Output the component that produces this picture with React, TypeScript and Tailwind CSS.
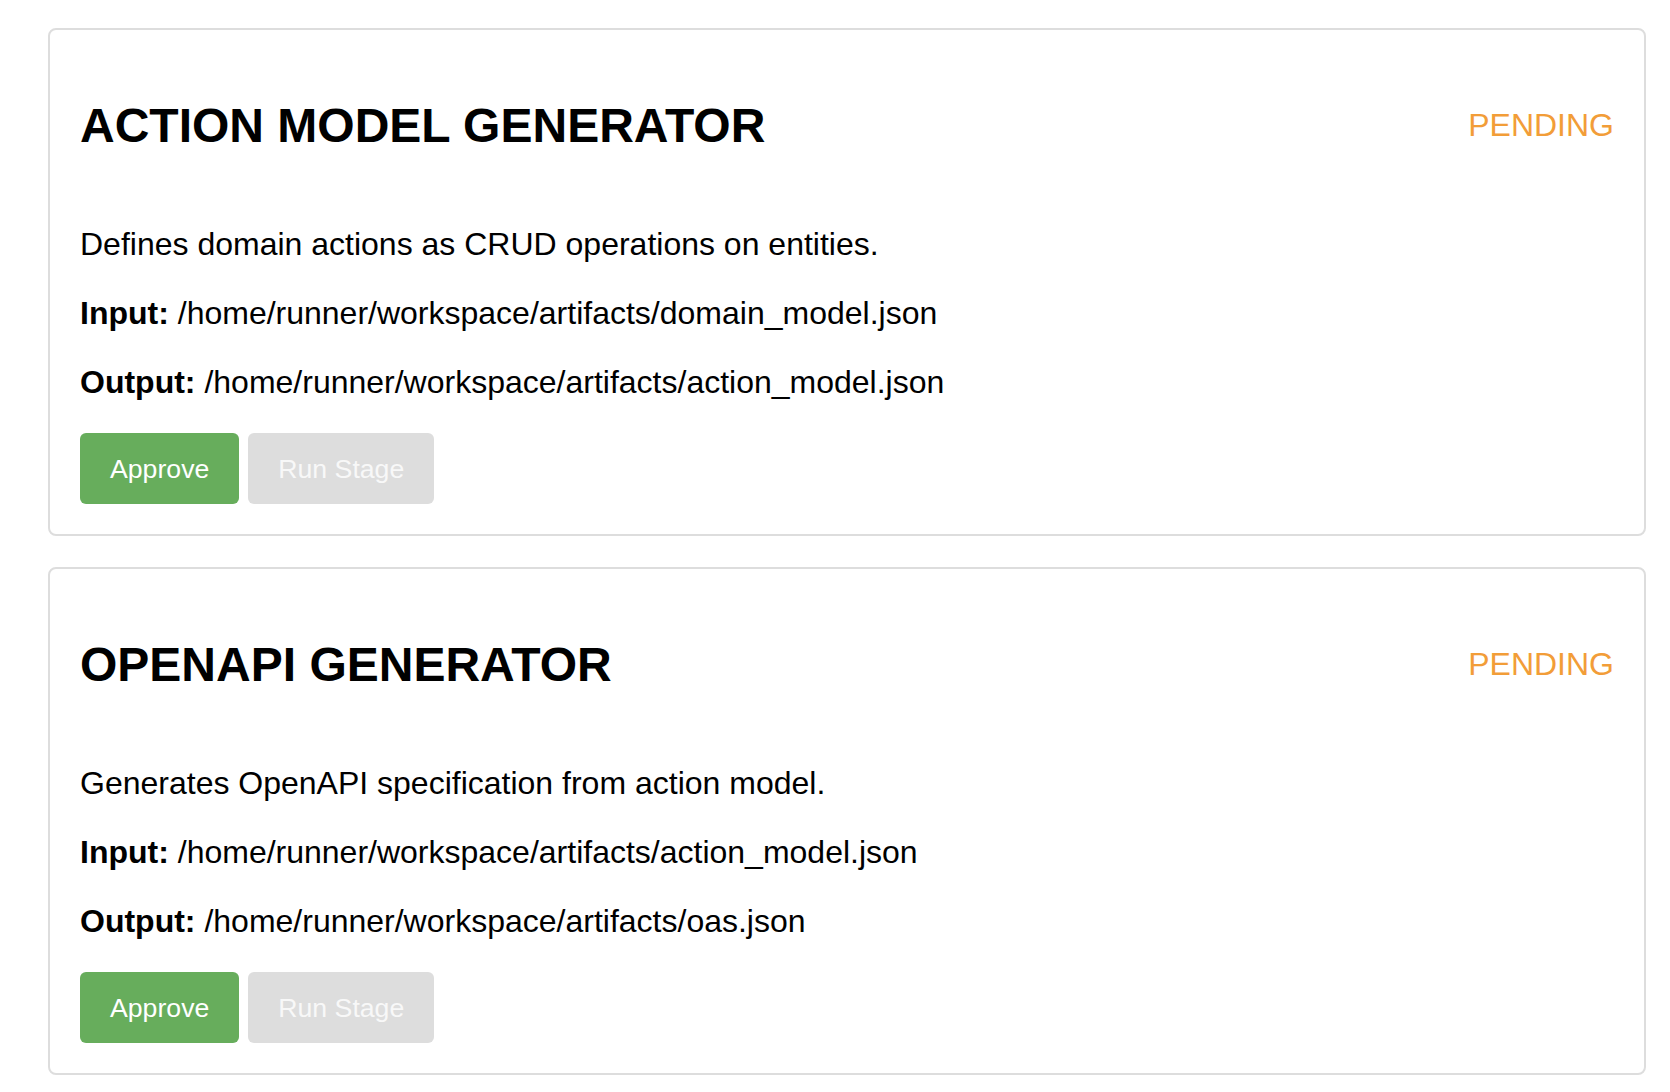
import React from "react";

type Stage = {
  title: string;
  description: string;
  input: string;
  output: string;
};

const stages: Stage[] = [
  {
    title: "ACTION MODEL GENERATOR",
    description: "Defines domain actions as CRUD operations on entities.",
    input: "/home/runner/workspace/artifacts/domain_model.json",
    output: "/home/runner/workspace/artifacts/action_model.json",
  },
  {
    title: "OPENAPI GENERATOR",
    description: "Generates OpenAPI specification from action model.",
    input: "/home/runner/workspace/artifacts/action_model.json",
    output: "/home/runner/workspace/artifacts/oas.json",
  },
];

function StageCard({ stage }: { stage: Stage }) {
  return (
    <div className="border-2 border-[#dddddd] rounded-[8px] bg-white px-[30px] pt-[30px] pb-[30px]">
      <div className="flex items-center justify-between pt-[38px] pb-[73px]">
        <h2 className="m-0 text-[48px] leading-[55px] font-bold text-black">{stage.title}</h2>
        <span className="text-[32px] leading-[37px] text-[#f29d38]">PENDING</span>
      </div>
      <div className="flex flex-col gap-[32px] text-[32px] leading-[37px] text-black">
        <p className="m-0">{stage.description}</p>
        <p className="m-0">
          <strong className="font-bold">Input:</strong> {stage.input}
        </p>
        <p className="m-0">
          <strong className="font-bold">Output:</strong> {stage.output}
        </p>
        <div className="flex gap-[9px]">
          <button className="h-[71px] px-[30px] rounded-[6px] bg-[#67ad5c] text-white text-[26.67px] leading-[30px]">
            Approve
          </button>
          <button
            disabled
            className="h-[71px] px-[30px] rounded-[6px] bg-[#dddddd] text-[#f8f8f8] text-[26.67px] leading-[30px]"
          >
            Run Stage
          </button>
        </div>
      </div>
    </div>
  );
}

export default function App() {
  return (
    <div
      className="min-h-[1092px] w-full bg-white pl-[48px] pr-[24px] pt-[28px] flex flex-col gap-[31px]"
      style={{ fontFamily: '"Liberation Sans", Arial, sans-serif' }}
    >
      {stages.map((s) => (
        <StageCard key={s.title} stage={s} />
      ))}
    </div>
  );
}
